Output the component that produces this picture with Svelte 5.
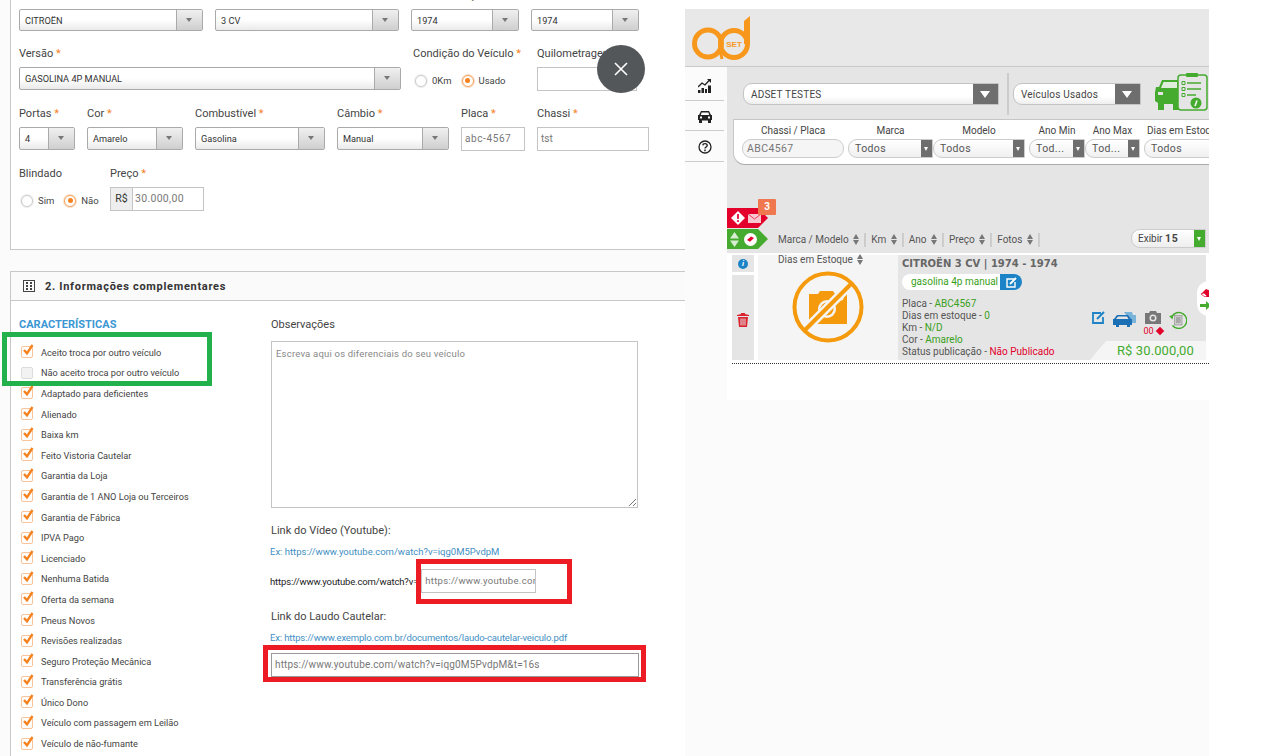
<script>
	const caracteristicas = [
		{ label: 'Aceito troca por outro veículo', on: true },
		{ label: 'Não aceito troca por outro veículo', on: false },
		{ label: 'Adaptado para deficientes', on: true },
		{ label: 'Alienado', on: true },
		{ label: 'Baixa km', on: true },
		{ label: 'Feito Vistoria Cautelar', on: true },
		{ label: 'Garantia da Loja', on: true },
		{ label: 'Garantia de 1 ANO Loja ou Terceiros', on: true },
		{ label: 'Garantia de Fábrica', on: true },
		{ label: 'IPVA Pago', on: true },
		{ label: 'Licenciado', on: true },
		{ label: 'Nenhuma Batida', on: true },
		{ label: 'Oferta da semana', on: true },
		{ label: 'Pneus Novos', on: true },
		{ label: 'Revisões realizadas', on: true },
		{ label: 'Seguro Proteção Mecânica', on: true },
		{ label: 'Transferência grátis', on: true },
		{ label: 'Único Dono', on: true },
		{ label: 'Veículo com passagem em Leilão', on: true },
		{ label: 'Veículo de não-fumante', on: true }
	];

	const filtros = [
		{ label: 'Marca', value: 'Todos', w: 85, gap: 0 },
		{ label: 'Modelo', value: 'Todos', w: 92, gap: 4 },
		{ label: 'Ano Min', value: 'Tod...', w: 56, gap: 0 },
		{ label: 'Ano Max', value: 'Tod...', w: 55, gap: 4 }
	];

	const colunas = ['Km', 'Ano', 'Preço', 'Fotos'];
</script>

<div class="page">
	<section class="form">
		<div class="panel panel--top">
			<div class="row row--first">
				<div class="select select--low w184"><span>CITROËN</span><i></i></div>
				<div class="select select--low w184"><span>3 CV</span><i></i></div>
				<div class="field"><label>Ano Fabricação <b>*</b></label><div class="select select--low w108"><span>1974</span><i></i></div></div>
				<div class="select select--low w108"><span>1974</span><i></i></div>
			</div>
			<div class="row row--second">
				<div class="field">
					<label>Versão <b>*</b></label>
					<div class="select w382"><span>GASOLINA 4P MANUAL</span><i></i></div>
				</div>
				<div class="field field--cond">
					<label>Condição do Veículo <b>*</b></label>
					<div class="radios">
						<span class="radio"></span><em>0Km</em>
						<span class="radio radio--on"></span><em>Usado</em>
					</div>
				</div>
				<div class="field">
					<label>Quilometragem</label>
					<div class="input w100"></div>
				</div>
			</div>
			<div class="row row--third">
				<div class="field"><label>Portas <b>*</b></label><div class="select w56"><span>4</span><i></i></div></div>
				<div class="field"><label>Cor <b>*</b></label><div class="select w96"><span>Amarelo</span><i></i></div></div>
				<div class="field"><label>Combustível <b>*</b></label><div class="select w130"><span>Gasolina</span><i></i></div></div>
				<div class="field"><label>Câmbio <b>*</b></label><div class="select w112"><span>Manual</span><i></i></div></div>
				<div class="field"><label>Placa <b>*</b></label><div class="input w64 spaced">abc-4567</div></div>
				<div class="field"><label>Chassi <b>*</b></label><div class="input w112">tst</div></div>
			</div>
			<div class="row row--fourth">
				<div class="field field--blind">
					<label>Blindado</label>
					<div class="radios">
						<span class="radio"></span><em>Sim</em>
						<span class="radio radio--on"></span><em>Não</em>
					</div>
				</div>
				<div class="field">
					<label>Preço <b>*</b></label>
					<div class="money"><span>R$</span><div>30.000,00</div></div>
				</div>
			</div>
		</div>

		<div class="panel panel--info">
			<header class="panel__head">
				<svg width="12" height="12" viewBox="0 0 12 12" fill="#444">
					<path d="M0 0h12v12H0zM1 1v10h10V1z" fill-rule="evenodd" />
					<path d="M3 2h2v2H3zM7 2h2v2H7zM3 5h2v2H3zM7 5h2v2H7zM3 8h2v2H3zM7 8h2v2H7z" />
				</svg>
				<h2>2. Informações complementares</h2>
			</header>
			<div class="info">
				<div class="chars">
					<h3>CARACTERÍSTICAS</h3>
					<ul>
						{#each caracteristicas as c}
							<li>
								<span class="check" class:check--on={c.on}>
									{#if c.on}
										<svg width="12" height="12" viewBox="0 0 12 12"><path d="M2 6l3 3.400L10.500 1" fill="none" stroke="#f5821f" stroke-width="2.400" /></svg>
									{/if}
								</span>
								{c.label}
							</li>
						{/each}
					</ul>
				</div>
				<div class="obs">
					<label>Observações</label>
					<div class="textarea">
						Escreva aqui os diferenciais do seu veículo
						<svg class="grip" width="9" height="9" viewBox="0 0 9 9"><path d="M1 8l7-7M5 8l3-3" stroke="#777" fill="none" /></svg>
					</div>
					<label class="obs__video">Link do Vídeo (Youtube):</label>
					<p class="hint">Ex: https://www.youtube.com/watch?v=iqg0M5PvdpM</p>
					<div class="video">
						<span>https://www.youtube.com/watch?v=</span>
						<div class="input input--video">https://www.youtube.cor</div>
					</div>
					<label class="obs__laudo">Link do Laudo Cautelar:</label>
					<p class="hint hint--laudo">Ex: https://www.exemplo.com.br/documentos/laudo-cautelar-veiculo.pdf</p>
					<div class="input input--laudo">https://www.youtube.com/watch?v=iqg0M5PvdpM&amp;t=16s</div>
				</div>
			</div>
		</div>
	</section>

	<section class="shot">
		<header class="shot__logo">
			<svg width="60" height="44" viewBox="0 0 60 44">
				<circle cx="16" cy="27.500" r="13.500" fill="none" stroke="#f7981d" stroke-width="5" />
				<path d="M28 20v14l2 9" fill="none" stroke="#f7981d" stroke-width="3" />
				<circle cx="42" cy="28" r="13.500" fill="none" stroke="#f7981d" stroke-width="5" />
				<path d="M52 5l6-5v28h-6z" fill="#f7981d" />
				<text x="42" y="30.500" text-anchor="middle" class="logo-set">SET</text>
			</svg>
		</header>
		<div class="shot__body">
			<nav class="side">
				<div class="side__item">
					<svg width="13" height="14" viewBox="0 0 13 14" fill="#222">
						<path d="M0 11h2.500v3H0zM3.500 9H6v5H3.500zM7 10h2v4H7zM10 6.500h3V14h-3z" />
						<path d="M0 8l4-4 3 2 4-4.500" fill="none" stroke="#222" stroke-width="1.300" />
						<path d="M9 0h4v4z" />
					</svg>
				</div>
				<div class="side__item">
					<svg width="14" height="12" viewBox="0 0 14 12" fill="#222">
						<path d="M3 0h8l2 4h1v5h-1v3h-3V9.500H4V12H1V9H0V4h1zM3.600 1.500L2.800 4h8.400l-.8-2.500zM2 5.500v2h2v-2zM10 5.500v2h2v-2z" fill-rule="evenodd" />
					</svg>
				</div>
				<div class="side__item">
					<svg width="14" height="14" viewBox="0 0 14 14">
						<circle cx="7" cy="7" r="6" fill="none" stroke="#222" stroke-width="1.300" />
						<path d="M4.800 5.400C5 3 9.200 3.200 9.200 5.400 9.200 7 7 7 7 8.600" fill="none" stroke="#222" stroke-width="1.400" />
						<rect x="6.200" y="9.600" width="1.600" height="1.600" fill="#222" />
					</svg>
				</div>
			</nav>
			<main class="content">
				<div class="gray">
					<div class="tops">
						<div class="pill pill--store"><span>ADSET TESTES</span><i></i></div>
						<div class="divider"></div>
						<div class="pill pill--tipo"><span>Veículos Usados</span><i></i></div>
						<svg class="carlist" width="53" height="38" viewBox="0 0 53 38">
							<path d="M1 14h3l3-7h19v23h-2v7h-6v-6H9v6H3v-7l-3-2v-9z" fill="#45ab2f" />
							<path d="M8.500 9H22v6H6z" fill="#dfeedb" />
							<rect x="3" y="19" width="5" height="3" fill="#e5e5e5" />
							<rect x="23" y="2" width="29" height="35" rx="3" fill="#e5e5e5" stroke="#45ab2f" stroke-width="1.500" />
							<rect x="31" y="0" width="12" height="4" rx="1" fill="#45ab2f" />
							<path d="M27 8.500h3v3h-3zM27 14.500h3v3h-3zM27 20.500h3v3h-3z" fill="none" stroke="#45ab2f" />
							<path d="M32 10h14M32 16h14M32 22h9" stroke="#45ab2f" stroke-width="1.400" />
							<circle cx="41" cy="30" r="5.500" fill="#45ab2f" />
							<path d="M40 33l2-5.500" stroke="#fff" stroke-width="1.500" />
						</svg>
					</div>
					<div class="filters">
						<div class="filter filter--chassi">
							<label>Chassi / Placa</label>
							<div class="fbox">ABC4567</div>
						</div>
						{#each filtros as f}
							<div class="filter" style="width:{f.w}px;margin-right:{f.gap}px">
								<label>{f.label}</label>
								<div class="fsel"><span>{f.value}</span><i></i></div>
							</div>
						{/each}
						<div class="filter filter--dias">
							<label>Dias em Estoque</label>
							<div class="fsel"><span>Todos</span></div>
						</div>
					</div>
					<div class="tools">
						<div class="flags">
							<div class="flag flag--red">
								<svg width="14" height="14" viewBox="0 0 16 16"><path d="M8 0l8 8-8 8-8-8z" fill="#fff" /><rect x="7" y="3.500" width="2" height="5.500" fill="#e3002b" /><rect x="7" y="10.500" width="2" height="2" fill="#e3002b" /></svg>
								<svg width="13" height="9" viewBox="0 0 13 9"><rect width="13" height="9" fill="#f9c7cf" /><path d="M0 0l6.500 5L13 0" fill="none" stroke="#e3002b" stroke-width=".7" /></svg>
							</div>
							<span class="flag__count">3</span>
							<div class="flag flag--green">
								<svg width="9" height="15" viewBox="0 0 9 15"><path d="M4.500 0L9 6.500H0zM4.500 15L0 8.500h9z" fill="#d8ecd2" /></svg>
								<svg width="13" height="13" viewBox="0 0 13 13">
									<circle cx="6.500" cy="6.500" r="6.500" fill="#fff" />
									<path d="M3 7l4-3.500 3 1.500-4 3.800z" fill="#e3002b" />
								</svg>
							</div>
						</div>
						<div class="cols">
							<span class="col">Marca / Modelo <u></u></span>
							{#each colunas as c}
								<span class="col col--sep">{c} <u></u></span>
							{/each}
							<span class="col col--sep"></span>
						</div>
						<div class="exibir"><span>Exibir <strong>15</strong></span><i></i></div>
					</div>
				</div>

				<article class="card">
					<div class="card__tools">
						<div class="tool tool--info"><span>i</span></div>
						<div class="tool tool--trash">
							<svg width="12" height="14" viewBox="0 0 12 14" fill="#d9232e">
								<path d="M0 2l4-1V0h4v1l4 1v1H0zM1 4h10l-1 10H2zM3.500 5.500v7h1v-7zM5.500 5.500v7h1v-7zM7.500 5.500v7h1v-7z" fill-rule="evenodd" />
							</svg>
						</div>
					</div>
					<div class="card__photo">
						<span class="dias">Dias em Estoque <u></u></span>
						<svg width="72" height="72" viewBox="0 0 72 72">
							<path d="M17 23h9l2-3h13l2 3h12v30H17z" fill="#f49a0c" />
							<circle cx="35" cy="38" r="9" fill="#f5f5f5" />
							<circle cx="35" cy="38" r="6.500" fill="#f49a0c" />
							<circle cx="49" cy="27" r="2.500" fill="#f5f5f5" />
							<path d="M12 60L60 12" stroke="#f5f5f5" stroke-width="9" />
							<path d="M12 60L60 12" stroke="#f49a0c" stroke-width="4" />
							<circle cx="36" cy="36" r="33.500" fill="none" stroke="#f49a0c" stroke-width="4" />
						</svg>
					</div>
					<div class="card__body">
						<h4>CITROËN 3 CV | 1974 - 1974</h4>
						<div class="versao"><span>gasolina 4p manual</span><i>
							<svg width="11" height="11" viewBox="0 0 11 11"><path d="M8 2H1v8h8V5" fill="none" stroke="#fff" stroke-width="1.400" /><path d="M4 7l6-6" stroke="#fff" stroke-width="1.800" /></svg>
						</i></div>
						<p>Placa - <em>ABC4567</em></p>
						<p>Dias em estoque - <em>0</em></p>
						<p>Km - <em>N/D</em></p>
						<p>Cor - <em>Amarelo</em></p>
						<p>Status publicação - <strong>Não</strong> <strong>Publicado</strong></p>
						<div class="actions">
							<svg width="13" height="13" viewBox="0 0 13 13"><path d="M9 2H1v10h10V6" fill="none" stroke="#1b83c6" stroke-width="1.800" /><path d="M5 8l7-7" stroke="#1b83c6" stroke-width="2" /></svg>
							<svg width="24" height="16" viewBox="0 0 24 16">
								<path d="M11 1h8l1 3h3v8h-4z" fill="#7ab3da" />
								<path d="M4 4h11l3 4h1v6h-2v2h-3v-2H6v2H3v-2H0V8h1z" fill="#1b6fb5" />
								<path d="M5 5.500h9l1.500 2.500H3z" fill="#e5e5e5" />
							</svg>
							<div class="cam">
								<svg width="16" height="13" viewBox="0 0 16 13"><path d="M0 2h4l1-2h6l1 2h4v11H0z" fill="#777" /><circle cx="8" cy="7" r="3.500" fill="#e5e5e5" /><circle cx="8" cy="7" r="2" fill="#777" /></svg>
								<span>00<b></b></span>
							</div>
							<svg width="18" height="18" viewBox="0 0 18 18"><path d="M2.500 6a8 8 0 1 1 1 8.500" fill="none" stroke="#45ab2f" stroke-width="1.400" /><path d="M0 5l4.500-1L3.500 8.500z" fill="#45ab2f" /><rect x="5.500" y="4.500" width="7.500" height="9.500" fill="#ccc" stroke="#888" stroke-width=".6" /><path d="M7 7h4.500M7 9h4.500M7 11h4.500" stroke="#666" stroke-width=".7" /></svg>
						</div>
						<div class="price">R$ 30.000,00</div>
					</div>
					<div class="card__edge">
						<svg width="11" height="9" viewBox="0 0 11 9"><path d="M1 6l5-5 5 2v6H5z" fill="#e3002b" /><path d="M1 6l3-1 3 3-2 1z" fill="#fff" stroke="#e3002b" stroke-width=".6" /></svg>
						<svg width="11" height="9" viewBox="0 0 11 9"><path d="M0 3h6V0l5 4.500L6 9V6H0z" fill="#45ab2f" /></svg>
					</div>
				</article>
				<div class="dots"></div>
			</main>
		</div>
	</section>

	<!-- marcações feitas em cima do print -->
	<div class="mark mark--green"></div>
	<div class="mark mark--red1"></div>
	<div class="mark mark--red2"></div>
	<button class="close" aria-label="Fechar">
		<svg width="14" height="14" viewBox="0 0 14 14"><path d="M1 1l12 12M13 1L1 13" stroke="#fff" stroke-width="1.600" /></svg>
	</button>
</div>

<style>
	:global(body) {
		margin: 0;
		background: #fff;
	}

	.page {
		position: relative;
		width: 1278px;
		height: 756px;
		overflow: hidden;
		display: flex;
		font-family: Roboto, "Open Sans", sans-serif;
		font-size: 10px;
		color: #333;
	}

	/* formulario */
	.form {
		width: 685px;
		flex: none;
		background: #fbfbfb;
		padding-left: 10px;
		box-sizing: border-box;
	}

	.panel {
		background: #fff;
		border-left: 1px solid #c8c8c8;
	}

	.panel--top {
		display: flow-root;
		height: 250px;
		box-sizing: border-box;
		border-bottom: 1px solid #c8c8c8;
		padding-left: 8px;
	}

	.row {
		display: flex;
		gap: 12px;
	}

	.row--first {
		margin-top: -11px;
		align-items: flex-end;
	}

	.row--second {
		margin-top: 16px;
	}

	.row--third {
		margin-top: 16px;
	}

	.row--fourth {
		margin-top: 16px;
		gap: 0;
	}

	.field {
		display: flex;
		flex-direction: column;
	}

	.field--cond {
		width: 112px;
	}

	.field--blind {
		width: 91px;
	}

	label {
		display: block;
		height: 20px;
		line-height: 14px;
		font-size: 11px;
		color: #444;
		white-space: nowrap;
	}

	label b {
		color: #f5821f;
		font-weight: 400;
	}

	.select {
		height: 23px;
		box-sizing: border-box;
		border: 1px solid #aaa;
		border-radius: 2px;
		background: linear-gradient(#fff 50%, #eaeaea);
		display: flex;
		align-items: center;
		justify-content: space-between;
		padding-left: 5px;
		font-size: 9.200px;
		color: #333;
	}

	.select--low {
		height: 22px;
	}

	.select i {
		width: 25px;
		height: 100%;
		border-left: 1px solid #aaa;
		background: linear-gradient(#f0f0f0, #cfcfcf);
		position: relative;
	}

	.select i::after {
		content: "";
		position: absolute;
		left: 9px;
		top: 8px;
		border: 3px solid transparent;
		border-top: 4px solid #777;
		border-bottom: 0;
	}

	.w56 { width: 56px; }
	.w64 { width: 64px; }
	.w96 { width: 96px; }
	.w100 { width: 100px; }
	.w108 { width: 108px; }
	.w112 { width: 112px; }
	.w130 { width: 130px; }
	.w184 { width: 184px; }
	.w382 { width: 382px; }

	.input {
		height: 24px;
		box-sizing: border-box;
		border: 1px solid #c4c4c4;
		background: #fff;
		padding-left: 3px;
		line-height: 22px;
		color: #777;
		font-size: 10px;
		white-space: nowrap;
		overflow: hidden;
	}

	.spaced {
		letter-spacing: 0.6px;
	}

	.radios {
		display: flex;
		align-items: center;
		height: 21px;
		margin-top: 3px;
		padding-left: 2px;
	}

	.radios em {
		font-style: normal;
		font-size: 9.500px;
		margin: 0 10px 0 5px;
		color: #444;
	}

	.radio {
		width: 10px;
		height: 10px;
		border: 1px solid #ccc;
		border-radius: 50%;
		box-shadow: 0 0 0 1px #eee;
		background: #fff;
		position: relative;
	}

	.radio--on {
		border-color: #f5a25d;
		box-shadow: 0 0 0 1px #fbe0c8;
	}

	.radio--on::after {
		content: "";
		position: absolute;
		inset: 2.500px;
		border-radius: 50%;
		background: #f5821f;
	}

	.money {
		display: flex;
		height: 24px;
		width: 94px;
		box-sizing: border-box;
		border: 1px solid #c4c4c4;
		line-height: 22px;
	}

	.money span {
		width: 21px;
		background: #eee;
		border-right: 1px solid #c4c4c4;
		text-align: center;
		font-size: 10.500px;
	}

	.money div {
		padding-left: 2px;
		color: #777;
		font-size: 10.500px;
		letter-spacing: 0.3px;
	}

	.panel--info {
		margin-top: 21px;
		height: 486px;
		border-top: 1px solid #c8c8c8;
	}

	.panel__head {
		height: 29px;
		box-sizing: border-box;
		background: #fafafa;
		border-bottom: 1px solid #c8c8c8;
		display: flex;
		align-items: center;
		padding-left: 12px;
		gap: 10px;
	}

	.panel__head h2 {
		margin: 0;
		font-size: 11px;
		letter-spacing: 0.7px;
		font-weight: 700;
		color: #333;
	}

	.info {
		display: flex;
		padding: 17px 0 0 8px;
	}

	.chars {
		width: 252px;
	}

	.chars h3 {
		margin: 0 0 11px;
		font-size: 11px;
		line-height: 13px;
		color: #3b97d3;
	}

	ul {
		list-style: none;
		margin: 0;
		padding: 0 0 0 2px;
	}

	li {
		height: 20.600px;
		display: flex;
		align-items: center;
		gap: 8px;
		font-size: 9.200px;
		color: #444;
		white-space: nowrap;
	}

	.check {
		width: 10px;
		height: 10px;
		border: 1px solid #ddd;
		border-radius: 2px;
		background: #f2f2f2;
		position: relative;
		flex: none;
	}

	.check--on {
		border-color: #f9c49a;
		background: #fff;
	}

	.check svg {
		position: absolute;
		left: 0;
		top: -3px;
	}

	.obs {
		width: 368px;
	}

	.textarea {
		position: relative;
		width: 367px;
		height: 167px;
		box-sizing: border-box;
		margin-top: 3px;
		border: 1px solid #c4c4c4;
		padding: 6px 4px;
		font-size: 9.500px;
		letter-spacing: 0.2px;
		color: #888;
	}

	.grip {
		position: absolute;
		right: 0;
		bottom: 0;
	}

	.obs__video {
		margin-top: 16px;
	}

	.obs__laudo {
		margin-top: 17px;
	}

	.hint {
		margin: 2px 0 0 -1px;
		font-size: 9.500px;
		line-height: 12px;
		color: #3f8fc4;
		white-space: nowrap;
	}

	.hint--laudo {
		letter-spacing: -0.15px;
	}

	.video {
		display: flex;
		align-items: center;
		margin: 11px 0 0 -1px;
		font-size: 9.500px;
		letter-spacing: -0.15px;
		color: #222;
		white-space: nowrap;
	}

	.input--video {
		width: 115px;
		margin-left: 3px;
		font-size: 9.500px;
		letter-spacing: 0.3px;
	}

	.input--laudo {
		width: 368px;
		margin-top: 9px;
		border: 1px solid #999;
		letter-spacing: 0.15px;
	}

	/* print da direita */
	.shot {
		width: 524px;
		flex: none;
		margin-top: 9px;
		background: #fbfbfb;
	}

	.shot__logo {
		height: 58px;
		box-sizing: border-box;
		background: #e8e8e8;
		border-bottom: 1px solid #c9c9c9;
		padding: 7px 0 0 7px;
	}

	.logo-set {
		font-family: "Liberation Sans", sans-serif;
		font-size: 8px;
		font-weight: 700;
		fill: #f7981d;
	}

	.shot__body {
		display: flex;
	}

	.side {
		width: 42px;
		flex: none;
		padding-top: 3px;
	}

	.side__item {
		width: 39px;
		height: 26.600px;
		padding-top: 3px;
		border-bottom: 1px solid #ccc;
		display: flex;
		align-items: center;
		justify-content: center;
	}

	.content {
		width: 482px;
		flex: none;
		height: 333px;
		background: #fff;
		overflow: hidden;
	}

	.gray {
		background: #e5e5e5;
		height: 186px;
		box-sizing: border-box;
		padding-top: 5px;
	}

	.tops {
		display: flex;
		align-items: center;
		height: 44px;
		padding-left: 16px;
		margin-bottom: 3px;
	}

	.pill {
		height: 22px;
		box-sizing: border-box;
		border: 1px solid #c4c4c4;
		border-radius: 9px 0 0 9px;
		background: linear-gradient(#fff 60%, #eee);
		display: flex;
		justify-content: space-between;
		align-items: center;
		padding-left: 7px;
		font-size: 10px;
		letter-spacing: 0.2px;
		color: #444;
	}

	.pill i {
		width: 25px;
		height: 20px;
		background: #6e6e6e;
		position: relative;
	}

	.pill i::after {
		content: "";
		position: absolute;
		left: 7px;
		top: 7px;
		border: 5px solid transparent;
		border-top: 7px solid #fff;
		border-bottom: 0;
	}

	.pill--store {
		width: 256px;
	}

	.divider {
		width: 2px;
		height: 42px;
		background: #ccc;
		margin: 0 4px 0 8px;
	}

	.pill--tipo {
		width: 128px;
	}

	.carlist {
		margin: -4px 0 0 14px;
	}

	.filters {
		height: 46px;
		box-sizing: border-box;
		margin-left: 6px;
		background: #fff;
		border-top: 1px solid #c6c6c6;
		border-bottom: 1px solid #aaa;
		border-left: 1px solid #c6c6c6;
		border-bottom-left-radius: 12px;
		display: flex;
		padding-left: 8px;
		overflow: hidden;
	}

	.filter {
		flex: none;
	}

	.filter label {
		text-align: center;
		font-size: 10px;
		height: 13px;
		line-height: 13px;
		margin-top: 4px;
		margin-bottom: 2px;
	}

	.filter--chassi {
		width: 102px;
		margin-right: 4px;
	}

	.filter--dias {
		width: 90px;
	}

	.filter--dias label {
		text-align: left;
		padding-left: 3px;
	}

	.fbox,
	.fsel {
		height: 19px;
		box-sizing: border-box;
		border: 1px solid #ccc;
		border-radius: 9px 0 0 9px;
		background: linear-gradient(#fff, #f0f0f0);
		padding-left: 6px;
		line-height: 17px;
		font-size: 10.500px;
		letter-spacing: 0.4px;
		color: #555;
		display: flex;
		justify-content: space-between;
	}

	.fbox {
		border-radius: 9px;
		background: #f5f5f5;
		padding-left: 4px;
		color: #777;
	}

	.fsel i {
		width: 11px;
		background: #6e6e6e;
		position: relative;
	}

	.fsel i::after {
		content: "";
		position: absolute;
		left: 3px;
		top: 7px;
		border: 2.500px solid transparent;
		border-top: 4px solid #fff;
		border-bottom: 0;
	}

	.tools {
		position: relative;
		height: 88px;
	}

	.flags {
		position: absolute;
		left: 0;
		top: 43px;
	}

	.flag {
		height: 20px;
		width: 41px;
		box-sizing: border-box;
		margin-bottom: 1px;
		display: flex;
		align-items: center;
		clip-path: polygon(0 0, 31px 0, 41px 50%, 31px 100%, 0 100%);
	}

	.flag--red {
		background: #e3002b;
		gap: 3px;
		padding-left: 4px;
	}

	.flag__count {
		position: absolute;
		left: 31px;
		top: -9px;
		width: 18px;
		height: 16px;
		background: #f0784f;
		color: #fff;
		font-size: 10px;
		font-weight: 700;
		text-align: center;
		line-height: 16px;
		border-radius: 1px;
	}

	.flag--green {
		background: #45ab2f;
		gap: 5px;
		padding-left: 3px;
	}

	.cols {
		position: absolute;
		left: 51px;
		top: 68px;
		display: flex;
		gap: 4px;
		font-size: 10px;
		color: #555;
		line-height: 14px;
		white-space: nowrap;
	}

	.col--sep {
		border-left: 2px solid #ccc;
		padding-left: 5px;
	}

	/* setinhas de ordenar */
	u {
		display: inline-block;
		position: relative;
		width: 7px;
		height: 11px;
		vertical-align: -2px;
		margin-left: 2px;
	}

	u::before,
	u::after {
		content: "";
		position: absolute;
		left: 0;
		border: 3.500px solid transparent;
	}

	u::before {
		top: 0;
		border-top: 0;
		border-bottom: 5px solid #777;
	}

	u::after {
		bottom: 0;
		border-bottom: 0;
		border-top: 5px solid #777;
	}

	.exibir {
		position: absolute;
		right: 3px;
		top: 64px;
		width: 75px;
		height: 19px;
		box-sizing: border-box;
		border: 1px solid #ccc;
		border-radius: 9px 0 0 9px;
		background: linear-gradient(#fff, #eee);
		display: flex;
		justify-content: space-between;
		padding-left: 6px;
		line-height: 17px;
		font-size: 10px;
		color: #444;
	}

	.exibir strong {
		font-size: 10.500px;
		letter-spacing: 0.8px;
	}

	.exibir i {
		width: 11px;
		background: #45ab2f;
		position: relative;
	}

	.exibir i::after {
		content: "";
		position: absolute;
		left: 3px;
		top: 7px;
		border: 2.500px solid transparent;
		border-top: 4px solid #fff;
		border-bottom: 0;
	}

	.card {
		display: flex;
		height: 105px;
		position: relative;
		margin-top: 2px;
		padding-right: 3px;
	}

	.card__tools {
		width: 22px;
		margin-left: 5px;
		display: flex;
		flex-direction: column;
		gap: 3px;
		flex: none;
	}

	.tool {
		background: #e5e5e5;
		display: flex;
		align-items: center;
		justify-content: center;
	}

	.tool--info {
		height: 17px;
	}

	.tool--info span {
		width: 10px;
		height: 10px;
		line-height: 10px;
		border-radius: 50%;
		background: #1b83c6;
		color: #fff;
		font-size: 8px;
		font-style: italic;
		text-align: center;
		font-weight: 700;
	}

	.tool--trash {
		flex: 1;
		padding-top: 4px;
	}

	.card__photo {
		margin-left: 4px;
		width: 140px;
		flex: none;
		background: #f5f5f5;
		position: relative;
		text-align: center;
	}

	.dias {
		position: absolute;
		left: 20px;
		top: -1px;
		font-size: 10px;
		color: #555;
		white-space: nowrap;
	}

	.card__photo svg {
		margin-top: 16px;
	}

	.card__body {
		flex: 1;
		background: #e5e5e5;
		position: relative;
		padding-left: 4px;
		font-size: 10px;
		color: #555;
	}

	.card__body h4 {
		margin: 3px 0 4px;
		font-family: "DejaVu Sans", sans-serif;
		font-size: 10px;
		line-height: 12px;
		color: #666;
	}

	.versao {
		display: flex;
		width: 120px;
		height: 16px;
		box-sizing: border-box;
		background: #fff;
		border-radius: 8px;
		padding-left: 9px;
		line-height: 16px;
		color: #3aa020;
		margin-bottom: 8px;
		justify-content: space-between;
		white-space: nowrap;
	}

	.versao i {
		width: 22px;
		background: #1b83c6;
		border-radius: 0 8px 8px 0;
		display: flex;
		align-items: center;
		justify-content: center;
	}

	.card__body p {
		margin: 0;
		line-height: 12px;
		white-space: nowrap;
	}

	.card__body em {
		font-style: normal;
		color: #3aa020;
	}

	.card__body strong {
		font-weight: 400;
		color: #e3002b;
	}

	.actions {
		position: absolute;
		left: 194px;
		top: 56px;
		display: flex;
		gap: 8px;
		align-items: flex-start;
	}

	.cam {
		width: 16px;
		display: flex;
		flex-direction: column;
		align-items: center;
	}

	.cam svg {
		display: block;
	}

	.cam span {
		margin-top: 2px;
		font-size: 9px;
		line-height: 10px;
		color: #e3002b;
		white-space: nowrap;
	}

	.cam b {
		display: inline-block;
		width: 6px;
		height: 6px;
		margin-left: 3px;
		background: #e3002b;
		transform: rotate(45deg);
	}

	.price {
		position: absolute;
		right: 0;
		bottom: 0;
		width: 116px;
		height: 19px;
		background: #f5f5f5;
		clip-path: polygon(16px 0, 100% 0, 100% 100%, 0 100%);
		padding-left: 27px;
		box-sizing: border-box;
		line-height: 19px;
		font-size: 13px;
		letter-spacing: 0.1px;
		color: #45ab2f;
		white-space: nowrap;
	}

	.card__edge {
		position: absolute;
		right: 0;
		top: 26px;
		width: 12px;
		height: 35px;
		background: #fff;
		border-radius: 12px 0 0 12px;
		display: flex;
		flex-direction: column;
		justify-content: center;
		align-items: flex-start;
		padding-left: 3px;
		box-sizing: border-box;
		gap: 4px;
		overflow: hidden;
	}

	.card__edge svg {
		flex: none;
	}

	.dots {
		margin: 3px 0 0 5px;
		border-top: 1px dotted #333;
	}

	/* marcacoes */
	.mark {
		position: absolute;
		box-sizing: border-box;
	}

	.mark--green {
		left: 2px;
		top: 332px;
		width: 210px;
		height: 54px;
		border: 5px solid #22b14c;
	}

	.mark--red1 {
		left: 416px;
		top: 559px;
		width: 156px;
		height: 45px;
		border: 5px solid #ed1c24;
	}

	.mark--red2 {
		left: 263px;
		top: 645px;
		width: 383px;
		height: 37px;
		border: 5px solid #ed1c24;
	}

	.close {
		position: absolute;
		left: 597px;
		top: 45px;
		width: 48px;
		height: 48px;
		border: 0;
		border-radius: 50%;
		background: #54575a;
		display: flex;
		align-items: center;
		justify-content: center;
		padding: 0;
	}
</style>
